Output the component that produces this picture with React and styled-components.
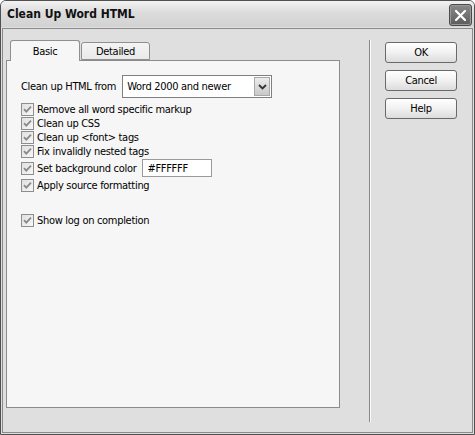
import React from 'react';
import styled, { createGlobalStyle } from 'styled-components';

const GlobalStyle = createGlobalStyle`
    html, body {
        margin: 0;
        padding: 0;
        background: #ffffff;
    }
    body {
        font-family: "DejaVu Sans Condensed", "Liberation Sans", sans-serif;
        font-size: 11px;
        letter-spacing: -0.3px;
        color: #000;
    }
`;

const Window = styled.div`
    width: 475px;
    height: 435px;
    box-sizing: border-box;
    border: 1px solid #4f4f4f;
    border-radius: 6px 6px 0 0;
    background: #dfdfdf;
    display: flex;
    flex-direction: column;
    overflow: hidden;
`;

const TitleBar = styled.div`
    height: 26px;
    flex-shrink: 0;
    display: flex;
    align-items: center;
    justify-content: space-between;
    padding: 0 2px 0 6px;
    background: linear-gradient(#f2f2f2, #dcdcdc 45%, #d2d2d2);
`;

const Title = styled.span`
    font-weight: bold;
    font-size: 12px;
    letter-spacing: 0;
    color: #111;
`;

const CloseButton = styled.div`
    width: 21px;
    height: 20px;
    margin-top: 2px;
    border-radius: 3px;
    border: 1px solid #4a4a4a;
    box-shadow: inset 0 0 0 1px #9a9a9a;
    background: linear-gradient(#8a8a8a, #5c5c5c);
    display: flex;
    align-items: center;
    justify-content: center;
`;

const Body = styled.div`
    flex: 1;
    margin: 1px;
    border: 1px solid #8a8a8a;
    display: flex;
    padding: 11px 0 10px 3px;
`;

const LeftColumn = styled.div`
    width: 334px;
    display: flex;
    flex-direction: column;
    margin-bottom: 14px;
`;

const TabStrip = styled.div`
    display: flex;
    align-items: flex-end;
    padding-left: 4px;
    height: 20px;
    position: relative;
    z-index: 1;
`;

const Tab = styled.div`
    box-sizing: border-box;
    width: ${p => p.$width}px;
    height: ${p => (p.$active ? 21 : 18)}px;
    margin-bottom: ${p => (p.$active ? -1 : 0)}px;
    border: 1px solid #8f8f8f;
    border-bottom: ${p => (p.$active ? 'none' : '1px solid #8f8f8f')};
    border-radius: 3px 3px 0 0;
    background: ${p => (p.$active ? '#f6f6f6' : 'linear-gradient(#f4f4f4, #e9e9e9)')};
    display: flex;
    align-items: ${p => (p.$active ? 'flex-start' : 'center')};
    padding-top: ${p => (p.$active ? 4 : 0)}px;
    justify-content: center;
    margin-left: ${p => (p.$active ? 0 : 1)}px;
`;

const Panel = styled.div`
    flex: 1;
    border: 1px solid #8c8c8c;
    background: #f6f6f6;
    padding: 14px 0 0 14px;
    display: flex;
    flex-direction: column;
`;

const FromRow = styled.div`
    display: flex;
    align-items: center;
    gap: 6px;
    margin-bottom: 4px;
`;

const Select = styled.div`
    box-sizing: border-box;
    width: 150px;
    height: 23px;
    border: 1px solid #7f7f7f;
    background: #fff;
    display: flex;
    align-items: center;
    justify-content: space-between;
    padding: 1px;
    padding-left: 4px;
`;

const SelectArrow = styled.div`
    box-sizing: border-box;
    width: 16px;
    height: 19px;
    border: 1px solid #a8a8a8;
    background: linear-gradient(#ececec, #c9c9c9);
    display: flex;
    align-items: center;
    justify-content: center;
`;

const CheckRow = styled.label`
    display: flex;
    align-items: center;
    gap: 3px;
    min-height: 14px;
    margin-top: ${p => p.$gap || 0}px;
`;

const Box = styled.span`
    box-sizing: border-box;
    width: 13px;
    height: 13px;
    border: 1px solid #8e8e8e;
    background: linear-gradient(135deg, #e0e0e0, #f7f7f7);
    display: flex;
    align-items: center;
    justify-content: center;
    flex-shrink: 0;
`;

const ColorInput = styled.div`
    box-sizing: border-box;
    width: 70px;
    height: 18px;
    margin-left: 3px;
    border: 1px solid #9a9a9a;
    background: #fff;
    padding-left: 4px;
    display: flex;
    align-items: center;
`;

const Separator = styled.div`
    width: 1px;
    background: #8a8a8a;
    border-right: 1px solid #fafafa;
    margin-left: 29px;
    margin-right: 14px;
`;

const ButtonColumn = styled.div`
    display: flex;
    flex-direction: column;
    gap: 7px;
    padding-top: 2px;
`;

const Button = styled.button`
    box-sizing: border-box;
    width: 72px;
    height: 21px;
    border: 1px solid #6a6a6a;
    border-radius: 3px;
    background: linear-gradient(#ffffff, #f1f1f1 50%, #dcdcdc);
    font-family: inherit;
    font-size: 11px;
    letter-spacing: -0.3px;
    color: #000;
    padding: 0;
`;

const Check = () => (
    <Box>
        <svg width="9" height="9" viewBox="0 0 9 9">
            <path d="M1 4.2 L3.3 6.6 L8 1.6" fill="none" stroke="#8a8a8a" strokeWidth="1.8" />
        </svg>
    </Box>
);

const options = [
    'Remove all word specific markup',
    'Clean up CSS',
    'Clean up <font> tags',
    'Fix invalidly nested tags'
];

const App = () => {
    return (
        <>
            <GlobalStyle />
            <Window>
                <TitleBar>
                    <Title>Clean Up Word HTML</Title>
                    <CloseButton>
                        <svg width="13" height="13" viewBox="0 0 13 13">
                            <path d="M2 2 L11 11 M11 2 L2 11" stroke="#fff" strokeWidth="2.2" strokeLinecap="round" />
                        </svg>
                    </CloseButton>
                </TitleBar>
                <Body>
                    <LeftColumn>
                        <TabStrip>
                            <Tab $active $width={70}>Basic</Tab>
                            <Tab $width={69}>Detailed</Tab>
                        </TabStrip>
                        <Panel>
                            <FromRow>
                                <span>Clean up HTML from</span>
                                <Select>
                                    <span>Word 2000 and newer</span>
                                    <SelectArrow>
                                        <svg width="9" height="6" viewBox="0 0 9 6">
                                            <path d="M1 1 L4.5 4.5 L8 1" fill="none" stroke="#333" strokeWidth="1.8" />
                                        </svg>
                                    </SelectArrow>
                                </Select>
                            </FromRow>
                            {options.map(text => (
                                <CheckRow key={text}>
                                    <Check />
                                    <span>{text}</span>
                                </CheckRow>
                            ))}
                            <CheckRow $gap={1}>
                                <Check />
                                <span>Set background color</span>
                                <ColorInput>#FFFFFF</ColorInput>
                            </CheckRow>
                            <CheckRow $gap={1}>
                                <Check />
                                <span>Apply source formatting</span>
                            </CheckRow>
                            <CheckRow $gap={21}>
                                <Check />
                                <span>Show log on completion</span>
                            </CheckRow>
                        </Panel>
                    </LeftColumn>
                    <Separator />
                    <ButtonColumn>
                        <Button>OK</Button>
                        <Button>Cancel</Button>
                        <Button>Help</Button>
                    </ButtonColumn>
                </Body>
            </Window>
        </>
    );
};

export default App;
